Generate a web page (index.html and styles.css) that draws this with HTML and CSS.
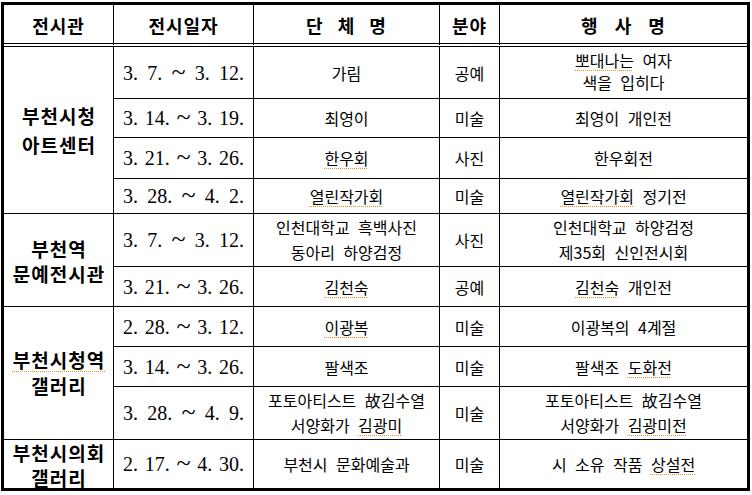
FILE: index.html
```html
<!DOCTYPE html>
<html lang="ko">
<head>
<meta charset="utf-8">
<title>전시 일정</title>
<link rel="stylesheet" href="styles.css">
</head>
<body>
<div class="sheet">
  <div class="c h">전시관</div>
  <div class="c h">전시일자</div>
  <div class="c h ws">단 체 명</div>
  <div class="c h">분야</div>
  <div class="c h ws2 last">행 사 명</div>

  <div class="c place g1"><span>부천시청<br>아트센터</span></div>
  <div class="c"><span class="date">3. 7. <span class="tl">~</span> 3. 12.</span></div>
  <div class="c">가림</div>
  <div class="c">공예</div>
  <div class="c last tight"><span><span class="sp">뽀대나는</span> 여자<br>색을 입히다</span></div>

  <div class="c"><span class="date">3. 14. <span class="tl">~</span> 3. 19.</span></div>
  <div class="c">최영이</div>
  <div class="c">미술</div>
  <div class="c last">최영이 개인전</div>

  <div class="c"><span class="date">3. 21. <span class="tl">~</span> 3. 26.</span></div>
  <div class="c"><span class="sp">한우회</span></div>
  <div class="c">사진</div>
  <div class="c last">한우회전</div>

  <div class="c"><span class="date">3. 28. <span class="tl">~</span> 4. 2.</span></div>
  <div class="c"><span class="sp">열린작가회</span></div>
  <div class="c">미술</div>
  <div class="c last"><span><span class="sp">열린작가회</span> 정기전</span></div>

  <div class="c place g2"><span>부천역<br>문예전시관</span></div>
  <div class="c"><span class="date">3. 7. <span class="tl">~</span> 3. 12.</span></div>
  <div class="c multi"><span>인천대학교 흑백사진<br>동아리 하양검정</span></div>
  <div class="c">사진</div>
  <div class="c last multi"><span>인천대학교 하양검정<br>제35회 신인전시회</span></div>

  <div class="c"><span class="date">3. 21. <span class="tl">~</span> 3. 26.</span></div>
  <div class="c"><span class="sp">김천숙</span></div>
  <div class="c">공예</div>
  <div class="c last"><span><span class="sp">김천숙</span> 개인전</span></div>

  <div class="c place g3"><span><span class="sp">부천시청역</span><br>갤러리</span></div>
  <div class="c"><span class="date">2. 28. <span class="tl">~</span> 3. 12.</span></div>
  <div class="c"><span class="sp">이광복</span></div>
  <div class="c">미술</div>
  <div class="c last">이광복의 4계절</div>

  <div class="c"><span class="date">3. 14. <span class="tl">~</span> 3. 26.</span></div>
  <div class="c">팔색조</div>
  <div class="c">미술</div>
  <div class="c last"><span>팔색조 <span class="sp">도화전</span></span></div>

  <div class="c"><span class="date">3. 28. <span class="tl">~</span> 4. 9.</span></div>
  <div class="c multi"><span>포토아티스트 故김수열<br>서양화가 <span class="sp">김광미</span></span></div>
  <div class="c">미술</div>
  <div class="c last multi"><span>포토아티스트 故김수열<br>서양화가 <span class="sp">김광미전</span></span></div>

  <div class="c place g4 end"><span>부천시의회<br>갤러리</span></div>
  <div class="c end"><span class="date">2. 17. <span class="tl">~</span> 4. 30.</span></div>
  <div class="c end">부천시 문화예술과</div>
  <div class="c end">미술</div>
  <div class="c end last"><span>시 소유 작품 <span class="sp">상설전</span></span></div>
</div>
</body>
</html>
```
FILE: styles.css
```css
html, body {
  margin: 0;
  padding: 0;
  background: #fff;
}

.sheet {
  box-sizing: border-box;
  width: 749px;
  margin: 2px 0 0 1px;
  border: 3px solid #000;
  display: grid;
  grid-template-columns: 110px 140px 186px 60px 247px;
  grid-template-rows: 42px 52px 39px 41px 35px 53px 40px 40px 40px 53px 48px;
  font-family: "Noto Sans CJK KR", "Noto Sans", sans-serif;
  font-size: 16px;
  color: #000;
}

.c {
  box-sizing: border-box;
  border-right: 1px solid #000;
  border-bottom: 1px solid #000;
  display: flex;
  align-items: center;
  justify-content: center;
  text-align: center;
  line-height: 24px;
  word-spacing: 4px;
  white-space: nowrap;
}

.c.last { border-right: none; }
.c.end { border-bottom: none; }

.h {
  border-bottom: 4px double #000;
  font-weight: 700;
  font-size: 18px;
  letter-spacing: 1px;
  padding-top: 1px;
}
.h.ws { word-spacing: 8px; }
.h.ws2 { word-spacing: 10px; }

.place {
  font-weight: 700;
  font-size: 19px;
  letter-spacing: 1px;
  padding-left: 1px;
}
.g1 { grid-row: span 4; line-height: 29px; }
.g2 { grid-row: span 2; line-height: 25px; padding-top: 2px; }
.g3 { grid-row: span 3; line-height: 26px; }
.g4 { line-height: 25px; padding-top: 1px; }

.tight { line-height: 22px; padding-bottom: 4px; }
.multi { line-height: 25px; }

.date {
  display: block;
  width: 121px;
  font-family: "Liberation Serif", "Times New Roman", serif;
  font-size: 20px;
  text-align: justify;
  text-align-last: justify;
  word-spacing: 0;
  line-height: 24px;
}

.tl {
  font-size: 26px;
  line-height: 0;
}

.sp {
  text-decoration: underline dotted #ee8a1c;
  text-decoration-thickness: 1px;
  text-underline-offset: 3px;
}
```
